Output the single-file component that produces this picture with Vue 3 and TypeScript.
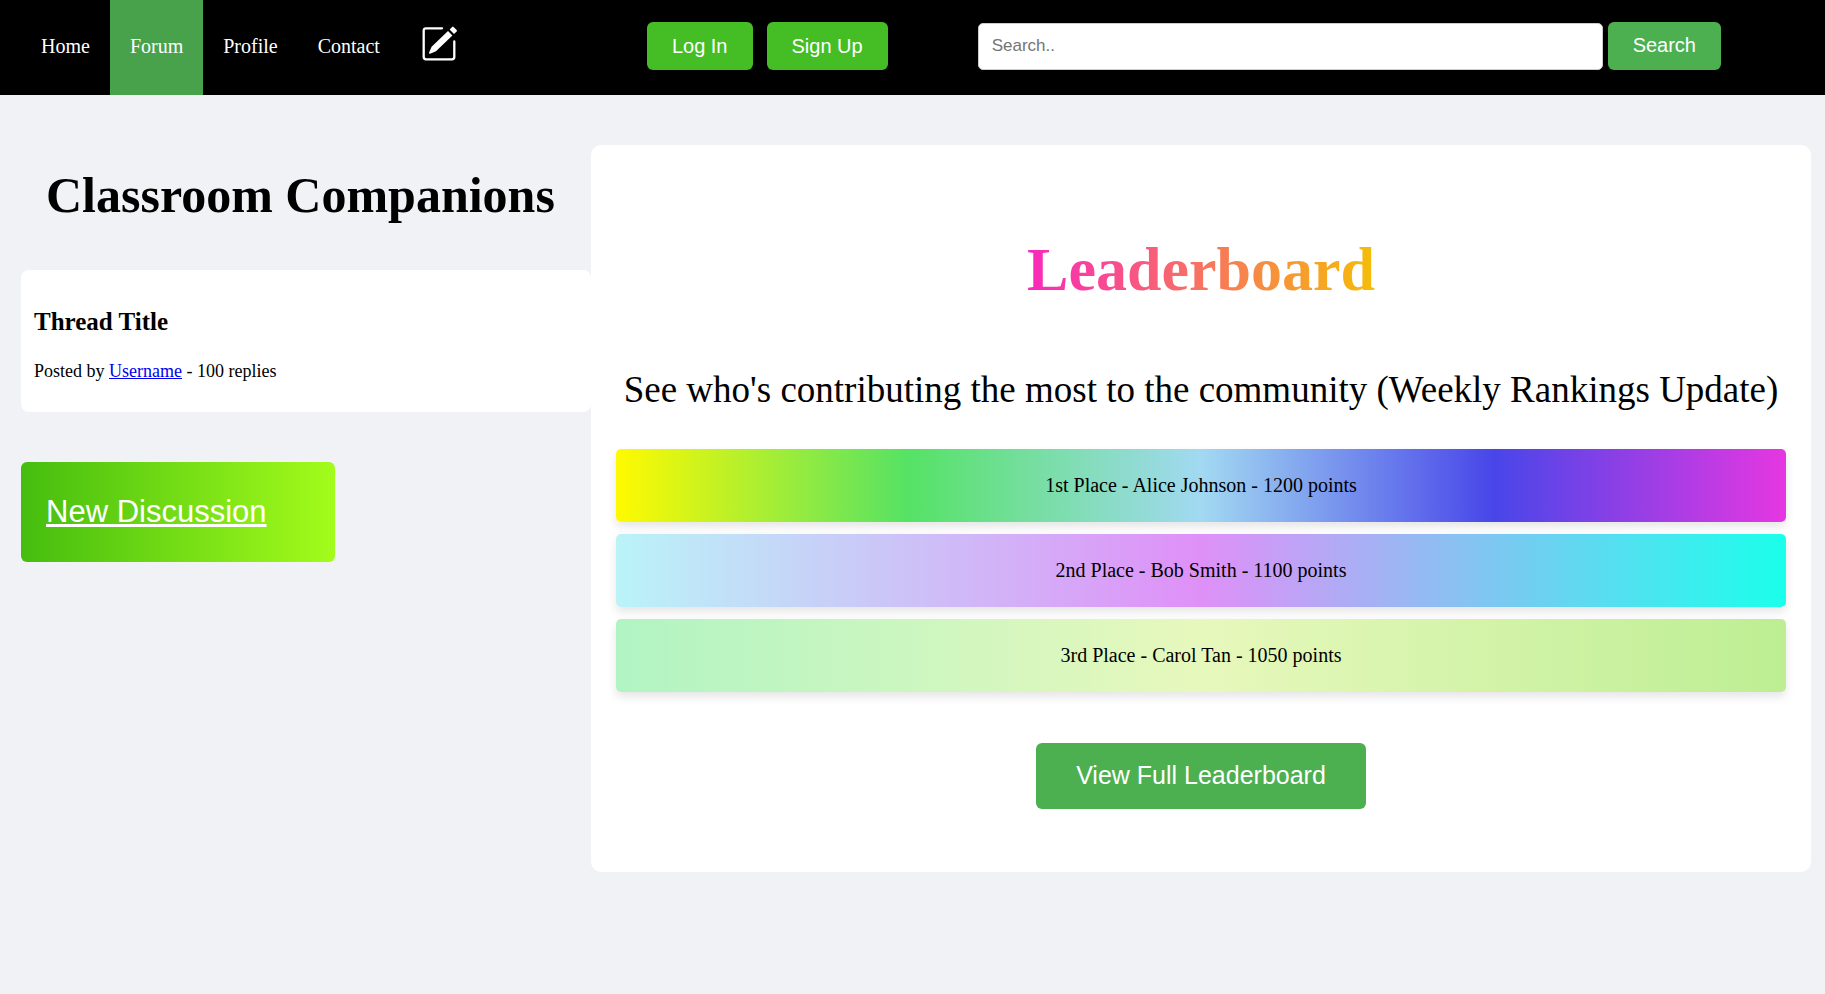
<script setup lang="ts">
import { ref } from 'vue'

interface NavLink {
  label: string
  href: string
  active?: boolean
}

interface Ranking {
  place: string
  name: string
  points: number
  tone: string
}

const links: NavLink[] = [
  { label: 'Home', href: '#home' },
  { label: 'Forum', href: '#forum', active: true },
  { label: 'Profile', href: '#profile' },
  { label: 'Contact', href: '#contact' },
]

const rankings: Ranking[] = [
  { place: '1st Place', name: 'Alice Johnson', points: 1200, tone: 'first' },
  { place: '2nd Place', name: 'Bob Smith', points: 1100, tone: 'second' },
  { place: '3rd Place', name: 'Carol Tan', points: 1050, tone: 'third' },
]

const query = ref('')
</script>

<template>
  <header class="topbar">
    <nav class="links">
      <a
        v-for="link in links"
        :key="link.label"
        :href="link.href"
        class="link"
        :class="{ active: link.active }"
      >{{ link.label }}</a>
    </nav>
    <a class="compose" href="#compose" aria-label="New post">
      <svg viewBox="0 0 36 36" width="36" height="36" aria-hidden="true">
        <path
          d="M20 2.3H4Q1.7 2.3 1.7 4.6V31Q1.7 33.3 4 33.3H30Q32.3 33.3 32.3 31V15.5"
          fill="none"
          stroke="#fff"
          stroke-width="2.3"
          stroke-linecap="round"
        />
        <path d="M26 5L30.4 9.4L14 25.2L8.2 27.8Q6.6 28 7.1 26.6L9.6 20.8Z" fill="#fff" />
        <path d="M27.6 3.5L30.1 .9Q30.8 .2 31.6 .9L34.6 4Q35.3 4.8 34.6 5.5L32 8Z" fill="#fff" />
      </svg>
    </a>
    <div class="auth">
      <button type="button" class="btn bright">Log In</button>
      <button type="button" class="btn bright">Sign Up</button>
    </div>
    <form class="search" role="search" @submit.prevent>
      <input v-model="query" type="text" placeholder="Search.." aria-label="Search" />
      <button type="submit" class="btn">Search</button>
    </form>
  </header>

  <main class="content">
    <section class="forum">
      <h1>Classroom Companions</h1>
      <article class="thread">
        <h2>Thread Title</h2>
        <p>Posted by <a href="#username">Username</a> - 100 replies</p>
      </article>
      <a class="discussion" href="#new-discussion">New Discussion</a>
    </section>

    <section class="board">
      <h2>Leaderboard</h2>
      <p>See who's contributing the most to the community (Weekly Rankings Update)</p>
      <ol>
        <li v-for="rank in rankings" :key="rank.place" :class="rank.tone">
          {{ rank.place }} - {{ rank.name }} - {{ rank.points }} points
        </li>
      </ol>
      <button type="button" class="full">View Full Leaderboard</button>
    </section>
  </main>
</template>

<style>
body {
  margin: 0;
  background: #f0f2f5;
  color: #000;
  font-family: "Liberation Serif", "Times New Roman", serif;
}
</style>

<style scoped>
* {
  box-sizing: border-box;
}

.topbar {
  display: flex;
  align-items: center;
  min-height: 95px;
  padding: 0 104px 0 21px;
  background: #000;
}

.links {
  display: flex;
  align-self: stretch;
}

.link {
  display: flex;
  align-items: center;
  padding: 0 20px 2px;
  color: #fff;
  font-size: 20px;
  text-decoration: none;
}

.link.active {
  background: #47a24b;
}

.compose {
  display: flex;
  margin: 0 189px 8px 22px;
}

.auth {
  display: flex;
  flex: none;
  gap: 14px;
  margin-right: 90px;
  padding-bottom: 3px;
}

.btn {
  flex: none;
  height: 48px;
  padding: 0 25px;
  border: 0;
  border-radius: 6px;
  background: #4caf50;
  color: #fff;
  font: 20px "Liberation Sans", Arial, sans-serif;
  cursor: pointer;
}

.btn.bright {
  background: #45bd24;
}

.search {
  display: flex;
  flex: 1;
  align-items: flex-end;
  gap: 5px;
  min-width: 0;
  padding-bottom: 4px;
}

.search input {
  flex: 1;
  min-width: 0;
  height: 47px;
  padding: 0 13px;
  border: 1px solid #ccc;
  border-radius: 5px;
  background: #fff;
  font: 17px "Liberation Sans", Arial, sans-serif;
}

.search input::placeholder {
  color: #757575;
}

.content {
  display: grid;
  grid-template-columns: minmax(0, 570fr) minmax(0, 1220fr);
  align-items: start;
  padding: 50px 14px 50px 21px;
}

.forum h1 {
  margin: 22px 0 46px;
  padding-left: 25px;
  font-size: 50px;
  line-height: 57px;
}

.thread {
  padding: 37px 13px 31px;
  border-radius: 8px;
  background: #fff;
}

.thread h2 {
  margin: 0 0 25px;
  font-size: 25px;
  line-height: 29px;
}

.thread p {
  margin: 0;
  font-size: 18px;
  line-height: 20px;
}

.thread a {
  color: #0000ee;
}

.discussion {
  display: block;
  width: 55%;
  margin-top: 50px;
  padding: 0 25px;
  border-radius: 6px;
  background: linear-gradient(to right, #45bd0f, #a3fc1b);
  color: #fff;
  font: 31px/100px "Liberation Sans", Arial, sans-serif;
}

.board {
  display: flex;
  flex-direction: column;
  align-items: center;
  padding: 89px 25px 63px;
  border-radius: 10px;
  background: #fff;
  text-align: center;
}

.board h2 {
  margin: 0 0 63px;
  background: linear-gradient(to right, #f928bb, #f5bd07);
  background-clip: text;
  -webkit-background-clip: text;
  color: transparent;
  font-size: 62px;
  line-height: 71px;
}

.board p {
  margin: 0 0 38px;
  font-size: 37px;
  line-height: 43px;
}

.board ol {
  display: flex;
  flex-direction: column;
  align-self: stretch;
  gap: 12px;
  margin: 0 0 51px;
  padding: 0;
  list-style: none;
}

.board li {
  padding: 25px;
  border-radius: 5px;
  box-shadow: 0 5px 10px rgba(0, 0, 0, 0.1);
  font-size: 20px;
  line-height: 23px;
}

.first {
  background: linear-gradient(to right, #fffa00, #55e265, #a2d9f2, #4846e9, #e637e1);
}

.second {
  background: linear-gradient(to right, #baf3f8, #df90f7, #1bffec);
}

.third {
  background: linear-gradient(to right, #b1f4c3, #e7f8bc, #bdee93);
}

.full {
  height: 66px;
  padding: 0 40px 2px;
  border: 0;
  border-radius: 6px;
  background: #4caf50;
  color: #fff;
  font: 25px "Liberation Sans", Arial, sans-serif;
  cursor: pointer;
}
</style>
